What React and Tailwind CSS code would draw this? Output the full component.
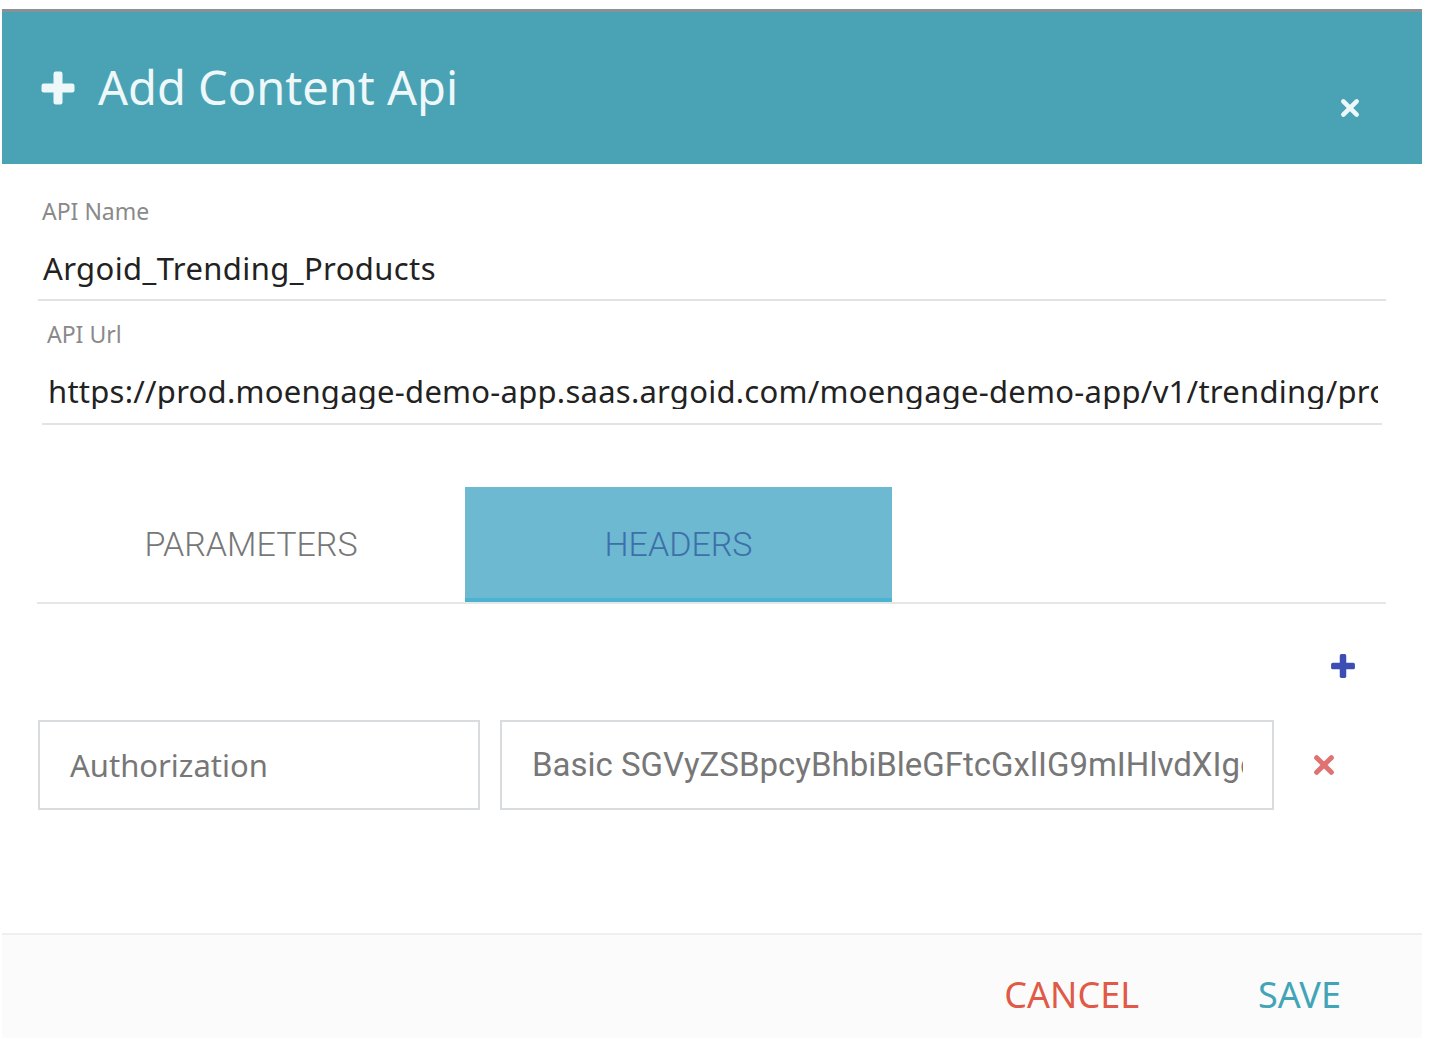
import { useState } from 'react';

const font = { fontFamily: '"Noto Sans", Lato, sans-serif' };
const tabFont = { fontFamily: 'Roboto, sans-serif', fontWeight: 300 };

function PlusIcon({ className }) {
  return (
    <svg viewBox="0 0 24 24" className={className} fill="currentColor">
      <rect x="9" y="1" width="6" height="22" rx="1.5" />
      <rect x="1" y="9" width="22" height="6" rx="1.5" />
    </svg>
  );
}

function CrossIcon({ className }) {
  return (
    <svg viewBox="0 0 24 24" className={className} fill="none" stroke="currentColor" strokeWidth="5.5" strokeLinecap="round">
      <path d="M4 4L20 20M20 4L4 20" />
    </svg>
  );
}

function Tab({ label, active, onClick, width }) {
  return (
    <button
      onClick={onClick}
      className={`${width} h-[115px] flex items-center justify-center text-[34px] ${
        active ? 'bg-[#6cb9d1] text-[#3f6fa8] border-b-4 border-[#4ab3d1] pt-[4px]' : 'text-[#777]'
      }`}
      style={tabFont}
    >
      {label}
    </button>
  );
}

export default function App() {
  const [tab, setTab] = useState('headers');
  return (
    <div className="min-h-[1038px] bg-white pt-[9px] pl-[2px] w-[1430px]" style={font}>
      <div className="w-[1420px] flex flex-col h-[1029px]">
        <div className="h-[155px] bg-[#4aa3b5] border-t-[3px] border-[#8a9194] flex items-start justify-between pl-[38px] pr-[62px]">
          <div className="flex items-center gap-[22px] mt-[52px] text-[#eef8fb]">
            <PlusIcon className="w-[36px] h-[36px]" />
            <span className="text-[47px] leading-none">Add Content Api</span>
          </div>
          <CrossIcon className="w-[20px] h-[20px] mt-[86px] text-[#eef8fb]" />
        </div>

        <div className="flex-1 px-[36px] pt-[35px]">
          <div className="pl-[4px] text-[23px] leading-[24px] text-[#8a8a8a]">API Name</div>
          <div className="border-b-2 border-[#e2e2e2] pl-[5px] pt-[27px] pb-[13px] text-[31px] leading-[36px] tracking-[0.4px] text-[#222]">
            Argoid_Trending_Products
          </div>
          <div className="pl-[9px] pt-[21px] text-[23px] leading-[24px] text-[#8a8a8a]">API Url</div>
          <div className="mx-[4px] border-b-2 border-[#e2e2e2] pt-[27px] pb-[14px]">
            <div className="ml-[6px] w-[1330px] overflow-hidden whitespace-nowrap text-[31px] leading-[36px] tracking-[0.25px] text-[#222]">
              https://prod.moengage-demo-app.saas.argoid.com/moengage-demo-app/v1/trending/products
            </div>
          </div>

          <div className="mt-[62px] flex border-b-2 border-[#e6e6e6] -ml-[1px]">
            <Tab label="PARAMETERS" width="w-[428px]" active={tab === 'params'} onClick={() => setTab('params')} />
            <Tab label="HEADERS" width="w-[427px]" active={tab === 'headers'} onClick={() => setTab('headers')} />
          </div>

          <div className="flex justify-end pr-[30px] pt-[49px]">
            <PlusIcon className="w-[26px] h-[26px] text-[#3c4db4]" />
          </div>

          <div className="flex items-center mt-[41px]">
            <div className="w-[442px] h-[90px] border-2 border-[#d8dcdf] flex items-center pl-[30px] text-[31px] text-[#777]">
              Authorization
            </div>
            <div className="ml-[20px] w-[774px] h-[90px] border-2 border-[#d8dcdf] flex items-center pl-[30px] pr-[29px]">
              <div className="overflow-hidden whitespace-nowrap text-[33px] leading-[40px] text-[#777]" style={{ fontFamily: 'Roboto, sans-serif' }}>
                Basic SGVyZSBpcyBhbiBleGFtcGxlIG9mIHlvdXIgdG9rZW4=
              </div>
            </div>
            <CrossIcon className="ml-[39px] w-[22px] h-[22px] text-[#e07272]" />
          </div>
        </div>

        <div className="h-[105px] border-t-2 border-[#efefef] bg-[#fbfbfb] flex items-center justify-end pr-[81px] gap-[119px] pt-[16px]">
          <button className="text-[36px] text-[#e05a47] leading-none">CANCEL</button>
          <button className="text-[36px] text-[#41a5b7] leading-none">SAVE</button>
        </div>
      </div>
    </div>
  );
}
